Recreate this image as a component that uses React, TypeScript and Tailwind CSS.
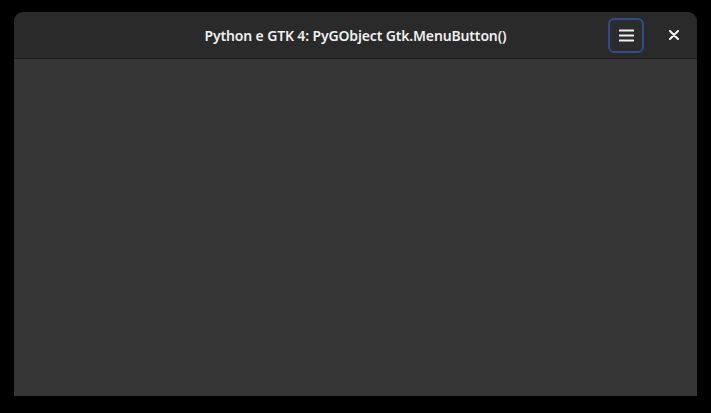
import React from "react";

export default function App() {
	return (
		<div className="w-[711px] h-[413px] bg-black pt-[12px] pl-[14px]" style={{ fontFamily: '"Noto Sans", "Open Sans", sans-serif' }}>
			<div className="w-[683px] h-[384px] flex flex-col rounded-t-[9px] overflow-hidden">
				{/* header bar */}
				<div className="h-[47px] bg-[#2a2a2a] border-b border-[#1c1c1c] flex items-center relative shrink-0">
					<div className="absolute inset-0 flex items-center justify-center">
						<span className="text-[#f0f0f0] text-[14px] font-semibold tracking-[-0.15px]">
							Python e GTK 4: PyGObject Gtk.MenuButton()
						</span>
					</div>
					<div className="ml-auto flex items-center gap-[18px] pr-[11px] relative">
						<button className="w-[36px] h-[35px] rounded-[6px] border-2 border-[#2f4d86] bg-[#2c2c2c] flex items-center justify-center">
							<svg width="15" height="13" viewBox="0 0 15 13">
								<rect x="0" y="0.5" width="15" height="2" rx="0.5" fill="#f0f0f0" />
								<rect x="0" y="5.5" width="15" height="2" rx="0.5" fill="#f0f0f0" />
								<rect x="0" y="10.5" width="15" height="2" rx="0.5" fill="#f0f0f0" />
							</svg>
						</button>
						<button className="w-[24px] h-[24px] flex items-center justify-center">
							<svg width="10" height="10" viewBox="0 0 10 10">
								<path d="M1 1 L9 9 M9 1 L1 9" stroke="#f5f5f5" strokeWidth="2" strokeLinecap="round" />
							</svg>
						</button>
					</div>
				</div>
				{/* content */}
				<div className="flex-1 bg-[#363636]" />
			</div>
		</div>
	);
}
